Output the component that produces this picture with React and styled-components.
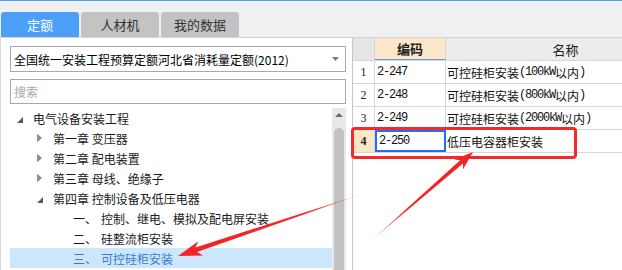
import React from "react"
import styled, { createGlobalStyle } from "styled-components"

const GlobalStyle = createGlobalStyle`
  html, body {
    margin: 0;
    padding: 0;
    background: #fff;
  }
  body {
    font-family: "Noto Sans CJK SC", "Liberation Sans", sans-serif;
  }
`

const Window = styled.div`
  position: relative;
  width: 622px;
  height: 270px;
  overflow: hidden;
  box-sizing: border-box;
  border-top: 1px solid #4d9ff3;
  background: #f0f0f0;
  display: flex;
  flex-direction: column;
`

const TabBar = styled.div`
  display: flex;
  gap: 2px;
  padding: 11px 0 0 1px;
  height: 36px;
  box-sizing: border-box;
  flex: none;
`

const Tab = styled.div`
  width: 78px;
  height: 25px;
  line-height: 25px;
  border-radius: 3px 3px 0 0;
  text-align: center;
  font-size: 13px;
  background: ${({ $active }) => ($active ? "#4ca0f7" : "#c3c3c3")};
  color: ${({ $active }) => ($active ? "#fff" : "#333")};
`

const Body = styled.div`
  flex: 1;
  min-height: 0;
  display: flex;
  border-top: 1px solid #d4d4d4;
  background: #fff;
`

const LeftPanel = styled.div`
  width: 353px;
  flex: none;
  box-sizing: border-box;
  border-left: 1px solid #dadada;
  border-right: 1px solid #c6c6c6;
  display: flex;
  flex-direction: column;
`

const Field = styled.div`
  margin: ${({ $top }) => $top}px 6px 0 9px;
  height: ${({ $h }) => $h}px;
  box-sizing: border-box;
  border: 1px solid #a9a9a9;
  padding: 0 3px;
  display: flex;
  align-items: center;
  justify-content: space-between;
  font-size: 12px;
  color: ${({ $muted }) => ($muted ? "#a8a8a8" : "#000")};
  white-space: nowrap;
  flex: none;
`

const Caret = styled.svg`
  width: 7px;
  height: 4px;
  margin-right: 3px;
  fill: #7a7a7a;
`

const TreeArea = styled.div`
  margin-top: 4px;
  flex: 1;
  min-height: 0;
  display: flex;
`

const TreeList = styled.div`
  margin-left: 9px;
  flex: 1;
  overflow: hidden;
`

const TreeRow = styled.div`
  height: 20px;
  display: flex;
  align-items: center;
  padding-left: ${({ $level }) => 4 + $level * 20}px;
  font-size: 12px;
  white-space: nowrap;
  background: ${({ $selected }) => ($selected ? "#cce6fb" : "transparent")};
  color: ${({ $selected }) => ($selected ? "#3d7ad6" : "#1a1a1a")};
`

const Toggle = styled.span`
  width: 19px;
  height: 20px;
  flex: none;
  box-sizing: border-box;
  padding-left: 3px;
  display: flex;
  align-items: center;
`

const Num = styled.span`
  width: 28px;
  flex: none;
`

const Scrollbar = styled.div`
  width: 14px;
  margin-right: 6px;
  flex: none;
  background: #e8e8e8;
  display: flex;
  flex-direction: column;
`

const ScrollUp = styled.div`
  height: 14px;
  display: flex;
  align-items: center;
  justify-content: center;
  svg {
    width: 8px;
    height: 4px;
    fill: #6a6a6a;
  }
`

const ScrollThumb = styled.div`
  margin: 6px 2px 0;
  flex: 1;
  background: #c2c2c2;
  border-radius: 5px 5px 0 0;
`

const RightPanel = styled.div`
  flex: 1;
  overflow: hidden;
  background: #fff;
`

const GridRow = styled.div`
  display: flex;
  height: ${({ $h }) => $h}px;
  box-sizing: border-box;
  border-bottom: 1px solid #d6d6d6;
`

const HeadCell = styled.div`
  width: ${({ $w }) => $w}px;
  flex: none;
  box-sizing: border-box;
  border-right: 1px solid #d3d3d3;
  border-bottom: ${({ $accent }) => ($accent ? "1px solid #5b9bdf" : "none")};
  background: ${({ $bg }) => $bg};
  display: flex;
  align-items: center;
  justify-content: center;
  font-size: 13px;
  font-weight: ${({ $bold }) => ($bold ? 700 : 400)};
  color: #222;
`

const RowNum = styled.div`
  width: 22px;
  flex: none;
  box-sizing: border-box;
  border-right: 1px solid #d6d6d6;
  background: ${({ $active }) => ($active ? "#fde6c8" : "#fff")};
  display: flex;
  align-items: center;
  justify-content: center;
  font-family: "Liberation Serif", serif;
  font-size: 12px;
  font-weight: ${({ $active }) => ($active ? 700 : 400)};
  color: #222;
`

const Cell = styled.div`
  width: ${({ $w }) => $w}px;
  flex: none;
  box-sizing: border-box;
  border-right: 1px solid #d6d6d6;
  border: ${({ $focus }) => ($focus ? "2px solid #1f6ff0" : undefined)};
  padding-left: ${({ $pad }) => $pad}px;
  display: flex;
  align-items: center;
  font-size: 12px;
  color: #111;
  white-space: nowrap;
`

const Ascii = styled.span`
  font-family: "Liberation Mono", monospace;
  font-size: 12px;
  letter-spacing: -1.2px;
`

const RedBox = styled.div`
  position: absolute;
  left: 351px;
  top: 126px;
  width: 226px;
  height: 32px;
  box-sizing: border-box;
  border: 3px solid #f32a2a;
  border-radius: 4px;
  pointer-events: none;
`

const ArrowLayer = styled.svg`
  position: absolute;
  left: 0;
  top: -1px;
  width: 622px;
  height: 270px;
  pointer-events: none;
`

const tree = [
  { level: 0, toggle: "open", text: "电气设备安装工程" },
  { level: 1, toggle: "closed", text: "第一章 变压器" },
  { level: 1, toggle: "closed", text: "第二章 配电装置" },
  { level: 1, toggle: "closed", text: "第三章 母线、绝缘子" },
  { level: 1, toggle: "open", text: "第四章 控制设备及低压电器" },
  { level: 2, num: "一、", text: "控制、继电、模拟及配电屏安装" },
  { level: 2, num: "二、", text: "硅整流柜安装" },
  { level: 2, num: "三、", text: "可控硅柜安装", selected: true },
]

const rows = [
  { n: 1, code: "2-247", name: "可控硅柜安装(100kW以内)" },
  { n: 2, code: "2-248", name: "可控硅柜安装(800kW以内)" },
  { n: 3, code: "2-249", name: "可控硅柜安装(2000kW以内)" },
  { n: 4, code: "2-250", name: "低压电容器柜安装", active: true },
]

const mixed = (s) =>
  s
    .split(/([\x20-\x7e]+)/)
    .filter(Boolean)
    .map((part, i) =>
      /^[\x20-\x7e]+$/.test(part) ? <Ascii key={i}>{part}</Ascii> : <span key={i}>{part}</span>
    )

const arrowPoints = ([tx, ty], [px, py], head, wing, shaft) => {
  const len = Math.hypot(px - tx, py - ty)
  const ux = (px - tx) / len
  const uy = (py - ty) / len
  const nx = -uy
  const ny = ux
  const bx = px - ux * head * 0.8
  const by = py - uy * head * 0.8
  const wx = px - ux * head
  const wy = py - uy * head
  return [
    [tx, ty],
    [bx + nx * shaft, by + ny * shaft],
    [wx + nx * wing, wy + ny * wing],
    [px, py],
    [wx - nx * wing, wy - ny * wing],
    [bx - nx * shaft, by - ny * shaft],
  ]
    .map((p) => p.map((v) => v.toFixed(1)).join(","))
    .join(" ")
}

const ToggleIcon = ({ kind }) =>
  kind === "open" ? (
    <svg width="6" height="6" viewBox="0 0 6 6" style={{ marginTop: 3 }}>
      <path d="M6 0 L6 6 L0 6 Z" fill="#595959" />
    </svg>
  ) : (
    <svg width="5" height="8" viewBox="0 0 5 8">
      <path d="M0.5 0.5 L4.5 4 L0.5 7.5 Z" fill="#8a8a8a" stroke="#6e6e6e" strokeWidth="0.6" />
    </svg>
  )

const App = () => (
  <Window>
    <GlobalStyle />
    <TabBar>
      <Tab $active>定额</Tab>
      <Tab>人材机</Tab>
      <Tab>我的数据</Tab>
    </TabBar>

    <Body>
      <LeftPanel>
        <Field $top={8} $h={26}>
          <span>全国统一安装工程预算定额河北省消耗量定额(2012)</span>
          <Caret viewBox="0 0 7 4">
            <path d="M0 0 H7 L3.5 4 Z" />
          </Caret>
        </Field>
        <Field $top={7} $h={25} $muted>
          搜索
        </Field>

        <TreeArea>
          <TreeList>
            {tree.map((item) => (
              <TreeRow key={item.text} $level={item.level} $selected={item.selected}>
                <Toggle>{item.toggle && <ToggleIcon kind={item.toggle} />}</Toggle>
                {item.num && <Num>{item.num}</Num>}
                {item.text}
              </TreeRow>
            ))}
          </TreeList>
          <Scrollbar>
            <ScrollUp>
              <svg viewBox="0 0 8 4">
                <path d="M0 4 L4 0 L8 4 Z" />
              </svg>
            </ScrollUp>
            <ScrollThumb />
          </Scrollbar>
        </TreeArea>
      </LeftPanel>

      <RightPanel>
        <GridRow $h={23}>
          <HeadCell $w={22} $bg="#e6e6e6" />
          <HeadCell $w={71} $bg="#fde7ca" $bold $accent>
            编码
          </HeadCell>
          <HeadCell $w={240} $bg="#ececec">
            名称
          </HeadCell>
        </GridRow>
        {rows.map((r) => (
          <GridRow key={r.n} $h={23}>
            <RowNum $active={r.active}>{r.n}</RowNum>
            <Cell $w={71} $pad={2} $focus={r.active}>
              {mixed(r.code)}
            </Cell>
            <Cell $w={240} $pad={1}>
              {mixed(r.name)}
            </Cell>
          </GridRow>
        ))}
      </RightPanel>
    </Body>

    <RedBox />
    <ArrowLayer viewBox="0 0 622 270">
      <defs>
        <linearGradient id="fade1" gradientUnits="userSpaceOnUse" x1="372" y1="240" x2="474" y2="151">
          <stop offset="0" stopColor="#f52424" stopOpacity="0.25" />
          <stop offset="0.35" stopColor="#f52424" stopOpacity="1" />
        </linearGradient>
        <linearGradient id="fade2" gradientUnits="userSpaceOnUse" x1="362" y1="194" x2="178" y2="256">
          <stop offset="0" stopColor="#f52424" stopOpacity="0.25" />
          <stop offset="0.3" stopColor="#f52424" stopOpacity="1" />
        </linearGradient>
      </defs>
      <polygon points={arrowPoints([372, 240], [473, 152], 19, 6.5, 2.2)} fill="url(#fade1)" />
      <polygon points={arrowPoints([362, 194], [178, 256], 24, 7.5, 2.4)} fill="url(#fade2)" />
    </ArrowLayer>
  </Window>
)

export default App
